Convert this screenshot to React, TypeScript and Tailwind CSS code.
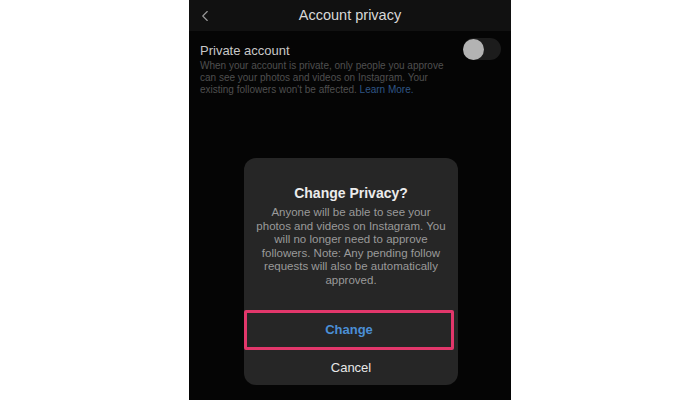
import { ChevronLeft } from "lucide-react"

export default function App() {
  return (
    <div className="w-[700px] h-[400px] bg-white flex justify-center" style={{ fontFamily: '"Liberation Sans", Arial, sans-serif' }}>
      <div className="relative w-[322px] h-full bg-[#050505] flex flex-col">
        {/* Top bar */}
        <div className="h-[31px] bg-[#111111] flex items-center relative">
          <ChevronLeft className="ml-[7px] w-[18px] h-[18px] text-[#9a9a9a]" strokeWidth={1.5} />
          <div className="absolute inset-0 flex items-center justify-center text-[14.5px] text-[#d8d8d8]">
            Account privacy
          </div>
        </div>

        {/* Private account setting */}
        <div className="flex pl-[11px] pr-[10px] pt-[7px]">
          <div className="flex-1">
            <div className="text-[13px] leading-[18px] text-[#c8c8c8] mt-[4px]">Private account</div>
            <p className="text-[10px] leading-[12px] text-[#4f4f4f] w-[250px]">
              When your account is private, only people you approve can see your photos and videos on Instagram. Your existing followers won't be affected. <span className="text-[#2f5585]">Learn More.</span>
            </p>
          </div>
          <div className="w-[38px] h-[22px] rounded-full bg-[#1c1c1c] flex items-center">
            <div className="w-[21px] h-[21px] rounded-full bg-[#b3b3b3]" />
          </div>
        </div>

        {/* Confirmation dialog */}
        <div className="absolute left-[55px] top-[158px] w-[214px] h-[227px] rounded-[12px] bg-[#262626] flex flex-col">
          <div className="pt-[26px] text-center text-[14px] leading-[18px] font-bold text-[#ececec]">Change Privacy?</div>
          <p className="mt-[4px] px-[11px] text-center text-[11.5px] leading-[13.5px] text-[#9a9a9a]">
            Anyone will be able to see your photos and videos on Instagram. You will no longer need to approve followers. Note: Any pending follow requests will also be automatically approved.
          </p>
          <div className="mt-auto">
            <div className="w-[210px] h-[40px] border-[3px] border-[#e2376b] rounded-[2px] flex items-center justify-center text-[13px] font-bold text-[#4b8fd6]">
              Change
            </div>
            <div className="h-[35px] flex items-center justify-center text-[13px] text-[#e8e8e8]">Cancel</div>
          </div>
        </div>
      </div>
    </div>
  )
}
